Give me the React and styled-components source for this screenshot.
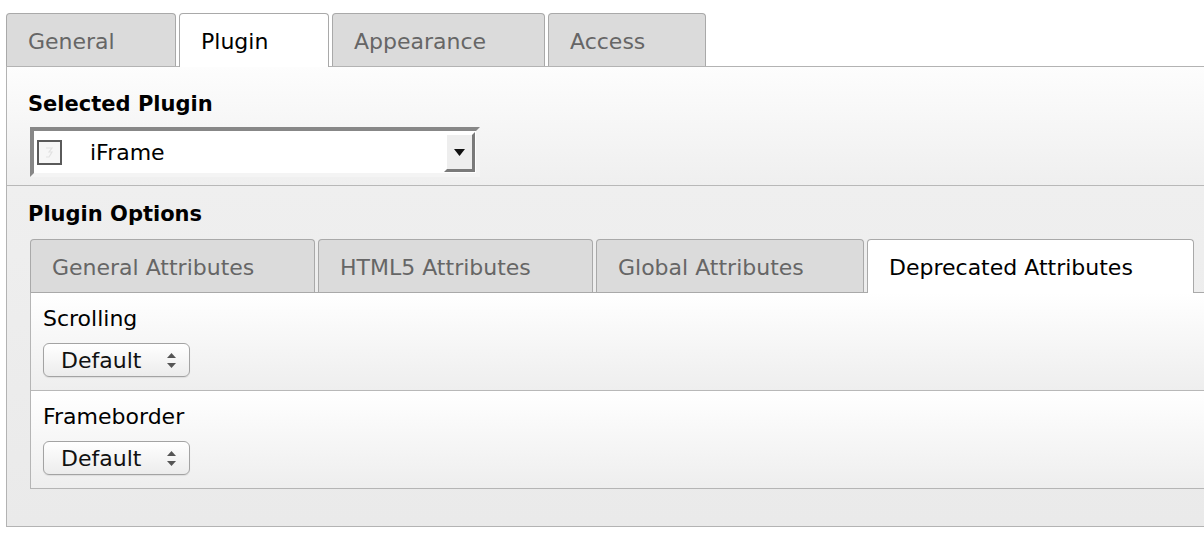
import React from "react";
import styled, { createGlobalStyle } from "styled-components";

const GlobalStyle = createGlobalStyle`
  html, body {
    margin: 0;
    background: #ffffff;
    font-family: "DejaVu Sans", Verdana, sans-serif;
  }
`;

const topTabs = [
  { label: "General", width: 170 },
  { label: "Plugin", width: 150, active: true },
  { label: "Appearance", width: 213 },
  { label: "Access", width: 158 },
];

const optionTabs = [
  { label: "General Attributes", width: 285 },
  { label: "HTML5 Attributes", width: 275 },
  { label: "Global Attributes", width: 268 },
  { label: "Deprecated Attributes", width: 327, active: true },
];

const fields = ["Scrolling", "Frameborder"];

const PluginIcon = () => (
  <svg width="25" height="25" viewBox="0 0 25 25">
    <rect x="1" y="1" width="23" height="23" fill="#f6f6f6" stroke="#5a5a5a" strokeWidth="2" />
    <path d="M9 8h6l-3 4h3l-3 5H9" fill="none" stroke="#e2e2e2" strokeWidth="1.2" />
  </svg>
);

const DropArrow = () => (
  <svg width="11" height="7" viewBox="0 0 11 7">
    <path d="M0 0h11L5.5 7z" fill="#111" />
  </svg>
);

const UpDown = () => (
  <svg width="9" height="15" viewBox="0 0 9 15">
    <path d="M4.5 0L9 5H0z" fill="#555" />
    <path d="M0 10h9l-4.5 5z" fill="#555" />
  </svg>
);

const Tabs = ({ items }) => (
  <TabBar>
    {items.map((t) => (
      <Tab key={t.label} $active={t.active} $width={t.width}>
        {t.label}
      </Tab>
    ))}
  </TabBar>
);

const App = () => {
  return (
    <Dialog>
      <GlobalStyle />
      <Tabs items={topTabs} />
      <Panel>
        <SelectSection>
          <Heading>Selected Plugin</Heading>
          <PluginSelect>
            <PluginIcon />
            <PluginName>iFrame</PluginName>
            <DropButton>
              <DropArrow />
            </DropButton>
          </PluginSelect>
        </SelectSection>
        <OptionsSection>
          <Heading>Plugin Options</Heading>
          <Tabs items={optionTabs} />
          <InnerPanel>
            {fields.map((f) => (
              <FieldRow key={f}>
                <Label>{f}</Label>
                <NativeSelect>
                  <span>Default</span>
                  <UpDown />
                </NativeSelect>
              </FieldRow>
            ))}
          </InnerPanel>
        </OptionsSection>
      </Panel>
    </Dialog>
  );
};

export default App;

const Dialog = styled.div`
  height: 538px;
  box-sizing: border-box;
  padding: 13px 0 0 6px;
  overflow: hidden;
`;

const TabBar = styled.div`
  display: flex;
  align-items: flex-end;
  gap: 3px;
  position: relative;
  z-index: 1;
`;

const Tab = styled.div`
  box-sizing: border-box;
  width: ${(p) => p.$width}px;
  height: ${(p) => (p.$active ? 54 : 53)}px;
  margin-bottom: ${(p) => (p.$active ? -1 : 0)}px;
  padding: ${(p) => (p.$active ? 3 : 4)}px 0 0 21px;
  display: flex;
  align-items: center;
  border: 1px solid #a9a9a9;
  border-bottom: none;
  border-radius: 4px 4px 0 0;
  background: ${(p) => (p.$active ? "#ffffff" : "#dbdbdb")};
  color: ${(p) => (p.$active ? "#000000" : "#666666")};
  font-size: 22px;
  line-height: 26px;
  white-space: nowrap;
`;

const Panel = styled.div`
  border: 1px solid #b3b3b3;
  border-right: none;
  background: #ebebeb;
`;

const SelectSection = styled.div`
  padding: 24px 0 8px 23px;
  border-bottom: 1px solid #b8b8b8;
  background: linear-gradient(#fdfdfd, #efefef);
`;

const OptionsSection = styled.div`
  padding: 15px 0 37px 23px;
  background: linear-gradient(#efefef, #eaeaea);
`;

const Heading = styled.div`
  margin-left: -2px;
  font-size: 21px;
  line-height: 26px;
  font-weight: bold;
  color: #000;
  margin-bottom: ${(p) => (p.$gap ? p.$gap : 12)}px;
`;

const PluginSelect = styled.div`
  box-sizing: border-box;
  width: 450px;
  height: 50px;
  margin-top: -2px;
  display: flex;
  align-items: center;
  border: 4px solid;
  border-color: #878787 #f4f4f4 #f4f4f4 #878787;
  background: #ffffff;
  padding-left: 3px;
`;

const PluginName = styled.span`
  flex: 1;
  margin-left: 28px;
  font-size: 22px;
  color: #000;
`;

const DropButton = styled.div`
  box-sizing: border-box;
  width: 31px;
  height: 40px;
  margin-right: 1px;
  display: flex;
  align-items: center;
  justify-content: center;
  border: 3px solid;
  border-color: #ffffff #7a7a7a #7a7a7a #ffffff;
  background: #eeeeee;
`;

const InnerPanel = styled.div`
  border: 1px solid #b5b5b5;
  border-right: none;
  border-top-color: #a9a9a9;
`;

const FieldRow = styled.div`
  padding: 13px 0 13px 12px;
  background: linear-gradient(#ffffff, #eeeeee);
  & + & {
    border-top: 1px solid #b8b8b8;
  }
`;

const Label = styled.div`
  font-size: 22px;
  line-height: 26px;
  color: #000;
  margin-bottom: 11px;
`;

const NativeSelect = styled.div`
  box-sizing: border-box;
  width: 147px;
  height: 34px;
  display: flex;
  align-items: center;
  justify-content: space-between;
  padding: 0 13px 0 17px;
  border: 1px solid #a3a3a3;
  border-radius: 6px;
  background: linear-gradient(#ffffff, #ececec);
  box-shadow: 0 1px 1px rgba(0, 0, 0, 0.08);
  font-size: 22px;
  color: #111;
`;
